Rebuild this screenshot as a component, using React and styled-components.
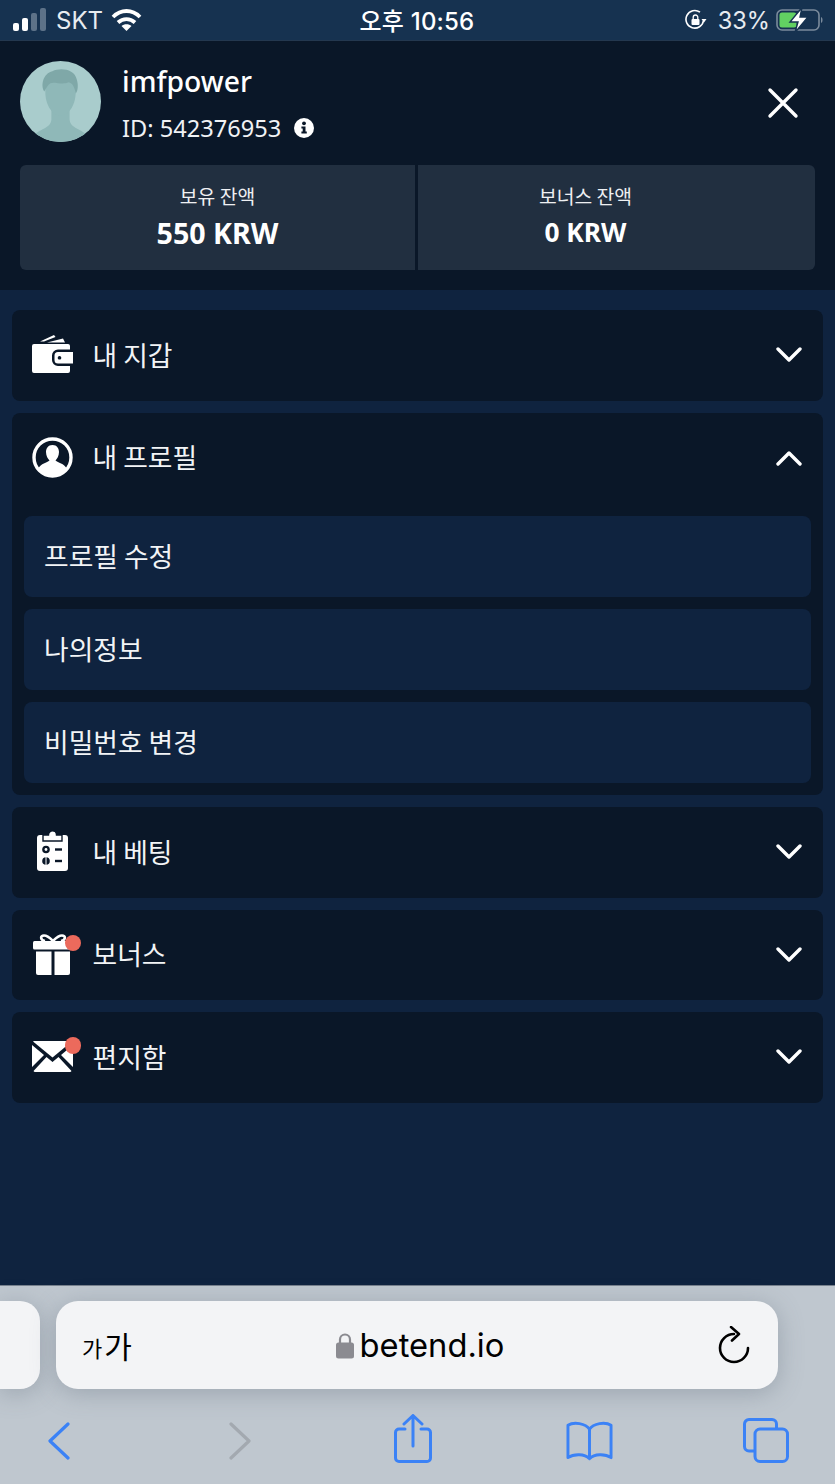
import React from 'react'
import styled, { createGlobalStyle } from 'styled-components'

const GlobalStyle = createGlobalStyle`
  html, body { margin: 0; padding: 0; background: #0f233f; }
  * { box-sizing: border-box; }
  body { font-family: "Noto Sans", "Noto Sans CJK KR", sans-serif; }
`

const Page = styled.div`
  width: 835px;
  height: 1484px;
  display: flex;
  flex-direction: column;
  overflow: hidden;
  background: #0f233f;
`

// status bar
const StatusBar = styled.div`
  height: 41px;
  flex: none;
  display: grid;
  grid-template-columns: 1fr auto 1fr;
  align-items: center;
  padding: 0 10px 0 13px;
  background: #163250;
  border-bottom: 1px solid #24384f;
  color: #fff;
  font-family: Inter, "Noto Sans CJK KR", sans-serif;
  font-size: 24px;
`
const StatusLeft = styled.div`
  display: flex;
  align-items: center;
  gap: 8px;
  color: #e8ecf0;
`
const StatusRight = styled.div`
  display: flex;
  align-items: center;
  justify-content: flex-end;
  color: #e8ecf0;
  & > span { margin: 0 6px 0 11px; font-size: 23.6px; }
`
const Clock = styled.div`
  margin-left: -4px;
  padding-bottom: 2px;
  font-weight: 500;
  font-size: 24px;
  letter-spacing: 0.2px;
`

// account header
const Header = styled.header`
  height: 249px;
  flex: none;
  padding: 20px;
  background: #0a1728;
`
const UserRow = styled.div`
  height: 80px;
  display: flex;
  align-items: center;
  gap: 21px;
  color: #fff;
`
const UserInfo = styled.div`
  flex: 1;
  display: flex;
  flex-direction: column;
  gap: 12px;
  padding-top: 3px;
`
const UserName = styled.div`
  font-size: 28.3px;
  line-height: 38px;
  font-weight: 500;
`
const UserId = styled.div`
  display: flex;
  align-items: center;
  gap: 13px;
  font-size: 23.6px;
  line-height: 32px;
  color: #f0f2f5;
`
const CloseButton = styled.button`
  width: 32px;
  height: 32px;
  margin: 4px 16px 0 0;
  padding: 0;
  border: 0;
  background: none;
`
const Balances = styled.div`
  margin-top: 24px;
  height: 105px;
  display: grid;
  grid-template-columns: 395px 1fr;
  gap: 3px;
`
const BalanceCard = styled.div`
  display: flex;
  flex-direction: column;
  align-items: center;
  justify-content: center;
  padding: 0 ${p => (p.$right ? '62px' : '0')} 2px 0;
  background: #212f40;
  color: #fff;
  border-radius: ${p => (p.$right ? '0 6px 6px 0' : '6px 0 0 6px')};
`
const BalanceLabel = styled.div`
  font-family: "Noto Sans CJK KR", sans-serif;
  font-size: 19.3px;
  line-height: 28px;
  color: #eef0f3;
`
const BalanceValue = styled.div`
  margin-top: ${p => (p.$small ? '3px' : '4px')};
  font-size: ${p => (p.$small ? '26.3px' : '28.6px')};
  line-height: 38px;
  font-weight: 700;
`

// menu
const Menu = styled.main`
  flex: 1;
  display: flex;
  flex-direction: column;
  gap: 12px;
  padding: 20px 12px;
`
const Section = styled.section`
  background: #0a1728;
  border-radius: 8px;
`
const SectionHead = styled.div`
  height: 90.5px;
  display: flex;
  align-items: center;
  padding: 0 21px 0 20px;
  color: #fff;
  font-family: "Noto Sans CJK KR", sans-serif;
  font-size: 26.8px;
`
const IconBox = styled.div`
  position: relative;
  width: 41px;
  height: 44px;
  margin-right: 19.5px;
  display: flex;
  align-items: center;
  justify-content: center;
  flex: none;
`
const Dot = styled.span`
  position: absolute;
  top: 2px;
  right: -8px;
  width: 16.4px;
  height: 16.4px;
  border-radius: 50%;
  background: #ec6a5c;
`
const SectionTitle = styled.div`
  flex: 1;
  padding-bottom: 2px;
  color: #f2f4f6;
`
const SubList = styled.div`
  display: flex;
  flex-direction: column;
  gap: 12.5px;
  padding: 13px 12px 12.5px;
`
const SubItem = styled.div`
  height: 80.5px;
  display: flex;
  align-items: center;
  padding: 0 20px 2px;
  border-radius: 8px;
  background: #0f233f;
  color: #f2f4f6;
  font-family: "Noto Sans CJK KR", sans-serif;
  font-size: 26.8px;
`

// safari chrome
const Safari = styled.footer`
  height: 199px;
  flex: none;
  background: #bfc7cf;
  border-top: 1px solid #77818d;
  display: flex;
  flex-direction: column;
`
const UrlRow = styled.div`
  display: flex;
  gap: 16px;
  padding-top: 15px;
  height: 105px;
`
const TabStub = styled.div`
  width: 40px;
  height: 88px;
  background: #f3f4f6;
  border-radius: 0 20px 20px 0;
  box-shadow: 0 4px 24px rgba(90, 100, 115, 0.35);
`
const UrlBar = styled.div`
  width: 722px;
  height: 88px;
  display: grid;
  grid-template-columns: 1fr auto 1fr;
  align-items: center;
  padding: 0 28px 0 26px;
  background: #f3f4f6;
  border-radius: 22px;
  box-shadow: 0 4px 24px rgba(90, 100, 115, 0.35);
  color: #000;
`
const TextSize = styled.div`
  font-family: "Noto Sans CJK KR", sans-serif;
  display: flex;
  align-items: flex-end;
  gap: 2px;
  font-size: 30px;
  line-height: 32px;
  & > small { font-size: 22px; line-height: 28px; }
`
const Domain = styled.div`
  display: flex;
  align-items: center;
  gap: 6px;
  margin-left: 8px;
  font-family: Inter, sans-serif;
  font-size: 32.7px;
`
const ReloadWrap = styled.div`
  display: flex;
  justify-content: flex-end;
`
const ToolBar = styled.nav`
  flex: 1;
  display: grid;
  grid-template-columns: 47px 134px 47px 126px 47px 130px 47px 129px 47px;
  align-items: center;
  padding: 6px 0 0 35px;
`
const ToolIcon = styled.div`
  display: flex;
  justify-content: center;
  grid-column: ${p => p.$col};
`

const Chevron = ({ up }) => (
  <svg width="26" height="16" viewBox="0 0 26 16" fill="none" stroke="#fff" strokeWidth="3.4" strokeLinecap="round" strokeLinejoin="round">
    <path d={up ? 'M2 14 L13 3 L24 14' : 'M2 2 L13 13 L24 2'} />
  </svg>
)

const Signal = () => (
  <svg width="35" height="24" viewBox="0 0 35 24">
    <rect x="0" y="15" width="6" height="8" rx="2" fill="#fff" />
    <rect x="9" y="10" width="6" height="13" rx="2" fill="#fff" />
    <rect x="18" y="5" width="6" height="18" rx="2" fill="#5d7288" />
    <rect x="27" y="0" width="6" height="23" rx="2" fill="#5d7288" />
  </svg>
)

const Wifi = () => (
  <svg width="31" height="23" viewBox="0 0 31 23" fill="none" stroke="#fff" strokeWidth="3.8">
    <path d="M2 8 C10 0 21 0 29 8" />
    <path d="M7 13.5 C12 9 19 9 24 13.5" />
    <path d="M15.5 22 L10.5 17 C13 14.8 18 14.8 20.5 17 Z" fill="#fff" stroke="none" />
  </svg>
)

const RotationLock = () => (
  <svg width="22" height="22" viewBox="0 0 22 22" fill="none">
    <path d="M18.5 11.5 A8.8 8.8 0 1 1 15 3.2" stroke="#fff" strokeWidth="1.6" />
    <path d="M16.5 10 L21.5 10 L19 13.5 Z" fill="#fff" />
    <rect x="6.5" y="10" width="8" height="6" rx="1" fill="#fff" />
    <path d="M8.2 10 V8.3 a2.3 2.3 0 0 1 4.6 0 V10" stroke="#fff" strokeWidth="1.3" />
  </svg>
)

const Battery = () => (
  <svg width="49" height="26" viewBox="0 0 49 26" fill="none">
    <rect x="1" y="3" width="42" height="20" rx="5" stroke="#7b8b9c" strokeWidth="1.6" />
    <rect x="3.5" y="5.5" width="17" height="15" rx="2.5" fill="#62d162" />
    <path d="M45 10 C47 10.5 47 15.5 45 16 Z" fill="#7b8b9c" />
    <path d="M26 0.5 L14 15 L22 15 L19 25.5 L32 10 L24 10 Z" fill="#fff" stroke="#163250" strokeWidth="1.4" />
  </svg>
)

const Avatar = () => (
  <svg width="81" height="81" viewBox="0 0 80 80">
    <clipPath id="avatar-clip"><circle cx="40" cy="40" r="40" /></clipPath>
    <g clipPath="url(#avatar-clip)">
      <rect width="80" height="80" fill="#a9cccc" />
      <path d="M10 76 C20 66 30 67 31 58 V46 H49 V58 C50 67 60 66 70 76 L70 80 H10 Z" fill="#8fb8b8" />
      <path d="M25 16 H55 V30 C55 45 47 54 40 54 C33 54 25 45 25 30 Z" fill="#8fb8b8" />
      <path d="M24 30 C20 24 23 12 32 10 C40 6 54 8 56 18 C58 24 57 30 55 32 C54 26 52 22 48 21 C42 24 34 20 30 22 C27 24 26 27 24 30 Z" fill="#7fa8a8" />
    </g>
  </svg>
)

const InfoIcon = () => (
  <svg width="20" height="20" viewBox="0 0 20 20">
    <circle cx="10" cy="10" r="10" fill="#fff" />
    <circle cx="10" cy="5.3" r="1.9" fill="#0a1728" />
    <path d="M7.4 8.6 H11.5 V13.6 H12.8 V15.5 H7.4 V13.6 H8.7 V10.5 H7.4 Z" fill="#0a1728" />
  </svg>
)

const CloseIcon = () => (
  <svg width="32" height="32" viewBox="0 0 32 32" stroke="#fff" strokeWidth="3.4" strokeLinecap="round">
    <path d="M3 3 L29 29 M29 3 L3 29" />
  </svg>
)

const WalletIcon = () => (
  <svg width="41" height="40" viewBox="0 0 41 40" fill="#fff">
    <path d="M8 6.5 L22 0 L23.5 2 L12 6.5 Z" />
    <path d="M15 7.5 L31 3.5 L33 7.5 Z" />
    <path d="M2 9 H36 a2 2 0 0 1 2 2 V14.5 H26 a6 6 0 0 0 -6 6 V25 a6 6 0 0 0 6 6 H38 V36 a2 2 0 0 1 -2 2 H2 a2 2 0 0 1 -2 -2 V11 a2 2 0 0 1 2 -2 Z" />
    <path fillRule="evenodd" d="M26 17 H41 V28.5 H26 a3.5 3.5 0 0 1 -3.5 -3.5 V20.5 a3.5 3.5 0 0 1 3.5 -3.5 Z M27.5 21 a1.8 1.8 0 1 0 0.01 0 Z" />
  </svg>
)

const ProfileIcon = () => (
  <svg width="41" height="41" viewBox="0 0 41 41">
    <circle cx="20.5" cy="20.5" r="18.5" fill="none" stroke="#fff" strokeWidth="3.4" />
    <path d="M20.5 8 C25 8 27 11.5 27 15 C27 19 25 22 23.5 23.5 C26 26 32 26 35 32 C31 37 26 39 20.5 39 C15 39 10 37 6 32 C9 26 15 26 17.5 23.5 C16 22 14 19 14 15 C14 11.5 16 8 20.5 8 Z" fill="#fff" />
  </svg>
)

const BetsIcon = () => (
  <svg width="31" height="44" viewBox="0 0 31 44">
    <path d="M3 5 H28 a3 3 0 0 1 3 3 V38 a3 3 0 0 1 -3 3 H3 a3 3 0 0 1 -3 -3 V8 a3 3 0 0 1 3 -3 Z" fill="#fff" />
    <path d="M6 11 V5 H11.5 C11.5 -0.5 19.5 -0.5 19.5 5 H25 V11 Z" fill="#fff" stroke="#0a1728" strokeWidth="1.4" />
    <circle cx="9" cy="19.5" r="3.8" fill="#0a1728" />
    <circle cx="9" cy="19.5" r="1.4" fill="#fff" />
    <circle cx="9" cy="31" r="3.8" fill="#0a1728" />
    <path d="M9 27 V35" stroke="#fff" strokeWidth="1" />
    <rect x="18" y="18.3" width="7" height="2.4" fill="#0a1728" />
    <rect x="18" y="29.8" width="7" height="2.4" fill="#0a1728" />
  </svg>
)

const GiftIcon = () => (
  <svg width="40" height="41" viewBox="0 0 40 41">
    <path d="M12 7 C7 6 7 1.5 11 1.5 C15 1.5 18 5 20 7 C22 5 25 1.5 29 1.5 C33 1.5 33 6 28 7" fill="none" stroke="#fff" strokeWidth="2.6" />
    <rect x="0" y="7" width="40" height="8.5" rx="1.5" fill="#fff" />
    <path d="M3 17.5 H18.5 V41 H5 a2 2 0 0 1 -2 -2 Z" fill="#fff" />
    <path d="M21.5 17.5 H37 V39 a2 2 0 0 1 -2 2 H21.5 Z" fill="#fff" />
  </svg>
)

const MailIcon = () => (
  <svg width="41" height="33" viewBox="0 0 41 33">
    <path d="M2 0 H39 a2 2 0 0 1 0.8 0.6 L20.5 16.5 L1 0.6 A2 2 0 0 1 2 0 Z" fill="#fff" />
    <path d="M0 4 L12 14 L0 26 Z M41 4 V26 L29 14 Z" fill="#fff" />
    <path d="M14.5 16 L20.5 21 L26.5 16 L39.5 30 a2 2 0 0 1 -1.5 1 H3 a2 2 0 0 1 -1.5 -1 Z" fill="#fff" />
  </svg>
)

const LockIcon = () => (
  <svg width="18" height="27" viewBox="0 0 18 27" fill="none">
    <path d="M4 12 V7.5 a5 5 0 0 1 10 0 V12" stroke="#8b8b91" strokeWidth="2.2" />
    <rect x="0" y="10.5" width="18" height="16" rx="2.5" fill="#8b8b91" />
  </svg>
)

const ReloadIcon = () => (
  <svg width="32" height="38" viewBox="0 0 32 38" fill="none" stroke="#000" strokeWidth="2.6" strokeLinecap="round" strokeLinejoin="round">
    <path d="M16 8 A14 14 0 1 0 30 22" />
    <path d="M13 1 L21 8 L14 14.5" />
  </svg>
)

const BLUE = '#3b82f6'

const BackIcon = ({ color }) => (
  <svg width="24" height="38" viewBox="0 0 24 38" fill="none" stroke={color} strokeWidth="3.2" strokeLinecap="round" strokeLinejoin="round">
    <path d="M21 2 L3 19 L21 36" />
  </svg>
)
const ForwardIcon = ({ color }) => (
  <svg width="24" height="38" viewBox="0 0 24 38" fill="none" stroke={color} strokeWidth="3.2" strokeLinecap="round" strokeLinejoin="round">
    <path d="M3 2 L21 19 L3 36" />
  </svg>
)
const ShareIcon = () => (
  <svg width="38" height="54" viewBox="0 0 38 54" fill="none" stroke={BLUE} strokeWidth="3" strokeLinecap="round" strokeLinejoin="round">
    <path d="M11 15 H5 a3.5 3.5 0 0 0 -3.5 3.5 V44 a3.5 3.5 0 0 0 3.5 3.5 H33 a3.5 3.5 0 0 0 3.5 -3.5 V18.5 a3.5 3.5 0 0 0 -3.5 -3.5 H27" />
    <path d="M19 32 V2 M10 10 L19 1.5 L28 10" />
  </svg>
)
const BookIcon = () => (
  <svg width="48" height="40" viewBox="0 0 48 40" fill="none" stroke={BLUE} strokeWidth="3" strokeLinecap="round" strokeLinejoin="round">
    <path d="M24 8 C20 2 8 0 2 4 V37 C8 33 19 33 24 38 C29 33 40 33 46 37 V4 C40 0 28 2 24 8 Z M24 8 V38" />
  </svg>
)
const TabsIcon = () => (
  <svg width="46" height="45" viewBox="0 0 46 45" fill="none" stroke={BLUE} strokeWidth="3" strokeLinejoin="round">
    <path d="M12 33 H6 a4.5 4.5 0 0 1 -4.5 -4.5 V6 A4.5 4.5 0 0 1 6 1.5 H29 A4.5 4.5 0 0 1 33.5 6 V11" />
    <rect x="12" y="11" width="32.5" height="32.5" rx="5" />
  </svg>
)

const sections = [
  { title: '내 지갑', icon: <WalletIcon /> },
  {
    title: '내 프로필',
    icon: <ProfileIcon />,
    open: true,
    items: ['프로필 수정', '나의정보', '비밀번호 변경'],
  },
  { title: '내 베팅', icon: <BetsIcon /> },
  { title: '보너스', icon: <GiftIcon />, dot: true },
  { title: '편지함', icon: <MailIcon />, dot: true },
]

const App = () => (
  <Page>
    <GlobalStyle />
    <StatusBar>
      <StatusLeft>
        <Signal />
        <span>SKT</span>
        <Wifi />
      </StatusLeft>
      <Clock>오후 10:56</Clock>
      <StatusRight>
        <RotationLock />
        <span>33%</span>
        <Battery />
      </StatusRight>
    </StatusBar>

    <Header>
      <UserRow>
        <Avatar />
        <UserInfo>
          <UserName>imfpower</UserName>
          <UserId>
            ID: 542376953
            <InfoIcon />
          </UserId>
        </UserInfo>
        <CloseButton>
          <CloseIcon />
        </CloseButton>
      </UserRow>
      <Balances>
        <BalanceCard>
          <BalanceLabel>보유 잔액</BalanceLabel>
          <BalanceValue>550 KRW</BalanceValue>
        </BalanceCard>
        <BalanceCard $right>
          <BalanceLabel>보너스 잔액</BalanceLabel>
          <BalanceValue $small>0 KRW</BalanceValue>
        </BalanceCard>
      </Balances>
    </Header>

    <Menu>
      {sections.map(s => (
        <Section key={s.title}>
          <SectionHead>
            <IconBox>
              {s.icon}
              {s.dot && <Dot />}
            </IconBox>
            <SectionTitle>{s.title}</SectionTitle>
            <Chevron up={s.open} />
          </SectionHead>
          {s.items && (
            <SubList>
              {s.items.map(i => <SubItem key={i}>{i}</SubItem>)}
            </SubList>
          )}
        </Section>
      ))}
    </Menu>

    <Safari>
      <UrlRow>
        <TabStub />
        <UrlBar>
          <TextSize><small>가</small>가</TextSize>
          <Domain>
            <LockIcon />
            betend.io
          </Domain>
          <ReloadWrap><ReloadIcon /></ReloadWrap>
        </UrlBar>
      </UrlRow>
      <ToolBar>
        <ToolIcon $col={1}><BackIcon color={BLUE} /></ToolIcon>
        <ToolIcon $col={3}><ForwardIcon color="#a3a9b0" /></ToolIcon>
        <ToolIcon $col={5}><ShareIcon /></ToolIcon>
        <ToolIcon $col={7}><BookIcon /></ToolIcon>
        <ToolIcon $col={9}><TabsIcon /></ToolIcon>
      </ToolBar>
    </Safari>
  </Page>
)

export default App
